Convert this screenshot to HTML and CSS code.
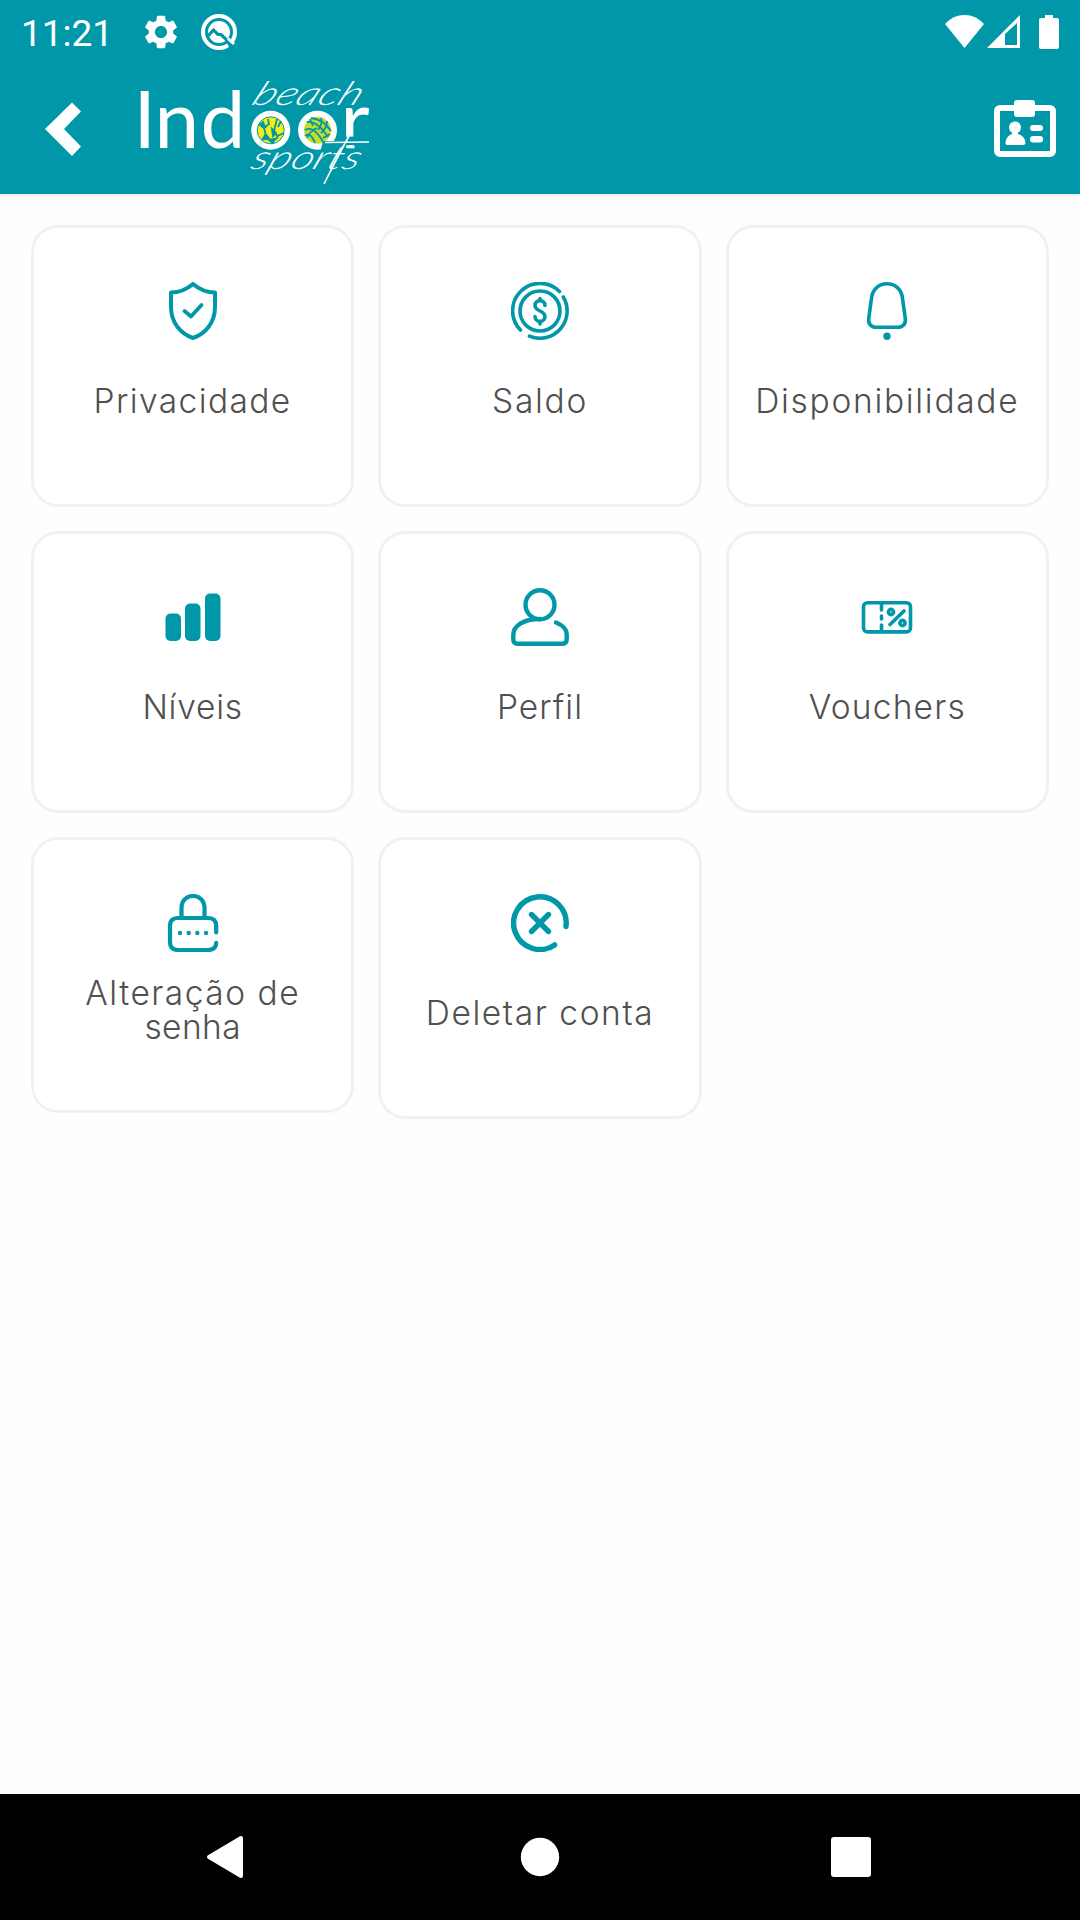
FILE: index.html
```html
<!DOCTYPE html>
<html lang="pt-BR">
<head>
  <meta charset="UTF-8" />
  <title>Indoor Beach Sports</title>
  <meta name="viewport" content="width=device-width, initial-scale=1" />
  <link rel="stylesheet" href="styles.css">
</head>
<body>
  <header class="header">
    <div class="status">
      <span class="clock">11:21</span>
      <svg class="gear" width="34" height="34" viewBox="2 2 20 20" fill="#fff"><path d="M19.14 12.94c.04-.3.06-.61.06-.94s-.02-.64-.07-.94l2.03-1.58c.18-.14.23-.41.12-.61l-1.92-3.32c-.12-.22-.37-.29-.59-.22l-2.39.96c-.5-.38-1.03-.7-1.62-.94l-.36-2.54c-.04-.24-.24-.41-.48-.41h-3.84c-.24 0-.43.17-.47.41l-.36 2.54c-.59.24-1.13.57-1.62.94l-2.39-.96c-.22-.08-.47 0-.59.22L2.74 8.87c-.12.21-.08.47.12.61l2.03 1.58c-.05.3-.09.63-.09.94s.02.64.07.94l-2.03 1.58c-.18.14-.23.41-.12.61l1.92 3.32c.12.22.37.29.59.22l2.39-.96c.5.38 1.03.7 1.62.94l.36 2.54c.05.24.24.41.48.41h3.84c.24 0 .44-.17.47-.41l.36-2.54c.59-.24 1.13-.56 1.62-.94l2.39.96c.22.08.47 0 .59-.22l1.92-3.32c.12-.22.07-.47-.12-.61l-2.01-1.58zM12 15.6c-1.98 0-3.6-1.62-3.6-3.6s1.62-3.6 3.6-3.6 3.6 1.62 3.6 3.6-1.62 3.6-3.6 3.6z"/></svg>
      <svg width="38" height="38" viewBox="0 0 38 38" fill="none">
        <circle cx="19" cy="19" r="16" stroke="#fff" stroke-width="4"/>
        <circle cx="19" cy="19" r="11" fill="#fff"/>
        <path d="M7 24L13.500 17L18 21.500H21L31 31" stroke="#0097a9" stroke-width="3.200"/>
        <path d="M27 30L30 36L35 30Z" fill="#0097a9"/>
        <path d="M28 25.500L34 31" stroke="#fff" stroke-width="3"/>
      </svg>
      <svg class="signals" width="116" height="36" viewBox="944 13 116 36" fill="#fff">
        <path d="M964.500 47L945 23Q953 14 964.500 14T984 23Z"/>
        <path fill-rule="evenodd" d="M987 47L1020 14V47ZM1005 33V44H1017V22Z"/>
        <path d="M1045 14H1053V17H1057Q1059 17 1059 19V46Q1059 48 1057 48H1041Q1039 48 1039 46V19Q1039 17 1041 17H1045Z"/>
      </svg>
    </div>
    <div class="appbar">
      <svg class="back" width="38" height="56" viewBox="44 100 38 56" fill="#fff"><path d="M45 128L72 101.500L81 110.500L64 128L81 145.500L72 155Z"/></svg>
      <svg class="logo" width="244" height="122" viewBox="132 68 244 122" fill="#fff">
        <text class="logo-name" x="132.500 153.500 199.500" y="148.300">Ind</text>
        <circle cx="269.700" cy="130.300" r="19.500"/>
        <circle cx="316.500" cy="130.300" r="19.500"/>
        <circle cx="269.700" cy="130.300" r="13.500" fill="#f6ee12"/>
        <circle cx="316.500" cy="130.300" r="13.500" fill="#c5dc2b"/>
        <g fill="none" stroke="#0097a9" stroke-width="1.800">
          <circle cx="269.700" cy="130.300" r="13.500" stroke-width="1"/>
          <path d="M259 125L263 128L268 124L267 119M263 128L265 135L261 140M276 119L273 131L276 136L283 133M280 121L277 127M265 135L268 138M270 143L277 137"/>
          <path d="M259 125L262 122L264 127ZM271 129L275 133L272 136ZM264 135L268 139L262 139ZM268 140L273 139L272 143Z" fill="#0097a9"/>
          <path d="M306 122Q316 120 327 137M310 118Q322 119 330 131M304 130Q313 125 322 142M304 136Q309 131 314 143M317 130Q322 124 320 118M320 133Q326 128 326 121M316 128Q309 131 306 138M322 138L329 134M312 126L309 119"/>
        </g>
        <text class="logo-name" x="339.500" y="148.300">r</text>
        <path d="M322 141H347L339 153L320 149ZM340 137L366 136V144L338 146Z" fill="#0097a9"/>
        <path d="M346.500 145.500H353.500V148.300H346.500Z"/>
        <text class="logo-script" transform="translate(249 105) skewX(-26)" textLength="108" lengthAdjust="spacingAndGlyphs">beach</text>
        <text class="logo-script" transform="translate(248 169) skewX(-22)" textLength="108" lengthAdjust="spacingAndGlyphs">sports</text>
        <path d="M324 142.500L368 142M348 136Q338 154 323 184" fill="none" stroke="#fff" stroke-width="1.600"/>
      </svg>
      <svg class="badge" width="62" height="58" viewBox="994 100 62 58" fill="#fff">
        <rect x="997" y="108" width="56" height="46" rx="3" fill="none" stroke="#fff" stroke-width="6"/>
        <rect x="1014" y="100" width="21" height="17" rx="3"/>
        <ellipse cx="1015" cy="127.500" rx="6" ry="6"/>
        <path d="M1012 130H1018V134Q1025 136 1025.500 143Q1025.500 145 1023 145H1007.500Q1005 145 1005.500 143Q1006 136 1012 134Z"/>
        <rect x="1030" y="125" width="13" height="6" rx="3"/>
        <rect x="1030" y="136" width="13" height="6.500" rx="3"/>
      </svg>
    </div>
  </header>

  <main class="grid">
    <div class="card">
      <svg class="icon" viewBox="0 0 58 58">
        <path d="M29 2Q19 10.500 7 10.500V25C7 41 17 52 29 56C41 52 51 41 51 25V10.500Q39 10.500 29 2Z" stroke-width="4"/>
        <path d="M20.500 29L27 34.500L37.500 23" stroke-width="3.800"/>
      </svg>
      <span class="label privacidade">Privacidade</span>
    </div>
    <div class="card">
      <svg class="icon" viewBox="0 0 58 58" stroke-width="3.600">
        <circle cx="29" cy="29" r="20"/>
        <path d="M9.500 48A27.300 27.300 0 0 1 48.500 9.500M52.300 15A27.300 27.300 0 0 1 18.500 54.200"/>
        <path d="M34 23.500C34 17 24 17 24 23.500C24 29.500 34 28.500 34 34.500C34 41 24 41 24 34.500M29 18.500V16.500M29 39.500V42"/>
      </svg>
      <span class="label saldo">Saldo</span>
    </div>
    <div class="card">
      <svg class="icon" viewBox="0 0 58 58" stroke-width="3.600">
        <path d="M29 1.800C21 1.800 15 7 13.700 15L10.700 36.500C9.800 41.500 13 45.200 18 45.200H40C45 45.200 48.200 41.500 47.300 36.500L44.300 15C43 7 37 1.800 29 1.800Z"/>
        <circle class="solid" cx="29" cy="54.300" r="3.700"/>
      </svg>
      <span class="label disponibilidade">Disponibilidade</span>
    </div>
    <div class="card">
      <svg class="icon" viewBox="0 0 58 58">
        <g class="solid">
          <rect x="1.500" y="25.500" width="15.500" height="27.500" rx="5"/>
          <rect x="21" y="15.500" width="15.500" height="37.500" rx="5"/>
          <rect x="41" y="5.500" width="15.500" height="47.500" rx="5"/>
        </g>
      </svg>
      <span class="label niveis">Níveis</span>
    </div>
    <div class="card">
      <svg class="icon" viewBox="0 0 58 58" stroke-width="4.400">
        <circle cx="29" cy="16.700" r="14.500"/>
        <path d="M29 31C12 31 2.300 38 2.300 47V51.500Q2.300 55.800 6.500 55.800H51.500Q55.700 55.800 55.700 51.500V46C55.700 40 51 37 45 34.500"/>
      </svg>
      <span class="label perfil">Perfil</span>
    </div>
    <div class="card">
      <svg class="icon" viewBox="0 0 58 58" stroke-width="3.600">
        <rect x="5.500" y="14.700" width="47" height="29.200" rx="4"/>
        <path d="M23.500 16V22M23.500 28V31M23.500 37V43M46 23L32 36.500"/>
        <circle cx="33" cy="24" r="2.600"/>
        <circle cx="44.500" cy="35" r="2.600"/>
      </svg>
      <span class="label vouchers">Vouchers</span>
    </div>
    <div class="card two-lines">
      <svg class="icon" viewBox="0 0 58 58" stroke-width="4.200">
        <path d="M17.500 23V14C17.500 -2 40.500 -2 40.500 14V23M52.200 38.500V32Q52.200 24 44 24H14Q6 24 6 32V48Q6 56 14 56H44Q52.200 56 52.200 48.800"/>
        <g class="solid"><circle cx="16" cy="39" r="2.200"/><circle cx="24.700" cy="39" r="2.200"/><circle cx="33.300" cy="39" r="2.200"/><circle cx="42" cy="39" r="2.200"/></g>
      </svg>
      <span class="label alteracao">Alteração de</span>
      <span class="label senha">senha</span>
    </div>
    <div class="card">
      <svg class="icon" viewBox="0 0 58 58" stroke-width="5.400">
        <path d="M55 32.500A26.300 26.300 0 1 0 43.700 50.900"/>
        <path d="M20.500 20.500L37.500 37.500M37.500 20.500L20.500 37.500"/>
      </svg>
      <span class="label deletar">Deletar conta</span>
    </div>
  </main>

  <nav class="navbar">
    <svg width="38" height="44" viewBox="0 0 38 44" fill="#fff" stroke="#fff" stroke-width="4" stroke-linejoin="round"><path d="M3 22L35 3V41Z"/></svg>
    <svg class="home" width="40" height="40" viewBox="0 0 40 40" fill="#fff"><circle cx="20" cy="20" r="19.200"/></svg>
    <svg width="40" height="40" viewBox="0 0 40 40" fill="#fff"><rect width="40" height="40" rx="3"/></svg>
  </nav>
</body>
</html>
```
FILE: styles.css
```css
* { box-sizing: border-box; }
body { margin: 0; min-height: 1920px; display: flex; flex-direction: column; background: #fefefe; font-family: Inter, "Open Sans", sans-serif; }
svg { display: block; flex: none; }

.header { height: 194px; background: #0097a9; box-shadow: 0 1px 3px rgba(220,150,120,0.3); }
.status { display: flex; align-items: center; height: 63px; padding: 0 20px 0 21px; color: white; }
.clock { width: 123px; font: 37px/63px Roboto, sans-serif; padding-top: 3px; }
.gear { margin-right: 22px; }
.signals { margin-left: auto; }
.appbar { display: flex; align-items: center; height: 131px; padding: 0 24px 0 44px; }
.logo { margin-left: 51px; }
.logo-name { font: 400 80px Lato, sans-serif; }
.logo-script { font: italic 300 33px Lato, sans-serif; }
.badge { margin-left: auto; }

.grid { flex: 1; display: grid; grid-template-columns: repeat(3, 1fr); gap: 24px; align-content: start; align-items: start; padding: 31px; }
.card { display: flex; flex-direction: column; align-items: center; height: 282px; padding-top: 54px; border: 3px solid #f1f1f1; border-radius: 27px; background: white; }
.icon { width: 58px; height: 58px; margin-bottom: 44px; fill: none; stroke: #0097a9; stroke-linecap: round; stroke-linejoin: round; }
.solid { fill: #0097a9; stroke: none; }
.label { font-size: 33.5px; font-weight: 350; line-height: 34px; letter-spacing: 1px; color: #505050; white-space: nowrap; }
.two-lines { height: 276px; }
.two-lines .icon { margin-bottom: 24px; }

/* tracking per label */
.privacidade { letter-spacing: 1.4px; }
.saldo { letter-spacing: 1.7px; }
.disponibilidade { letter-spacing: 1.7px; }
.niveis { letter-spacing: 0.8px; }
.vouchers { letter-spacing: 1.2px; }
.alteracao { letter-spacing: 1.5px; }
.senha { letter-spacing: 0.4px; }
.deletar { letter-spacing: 1.6px; }

.navbar { display: flex; align-items: center; justify-content: space-between; height: 126px; padding: 0 209px 0 206px; background: black; }
.home { margin-left: 4px; }
```
